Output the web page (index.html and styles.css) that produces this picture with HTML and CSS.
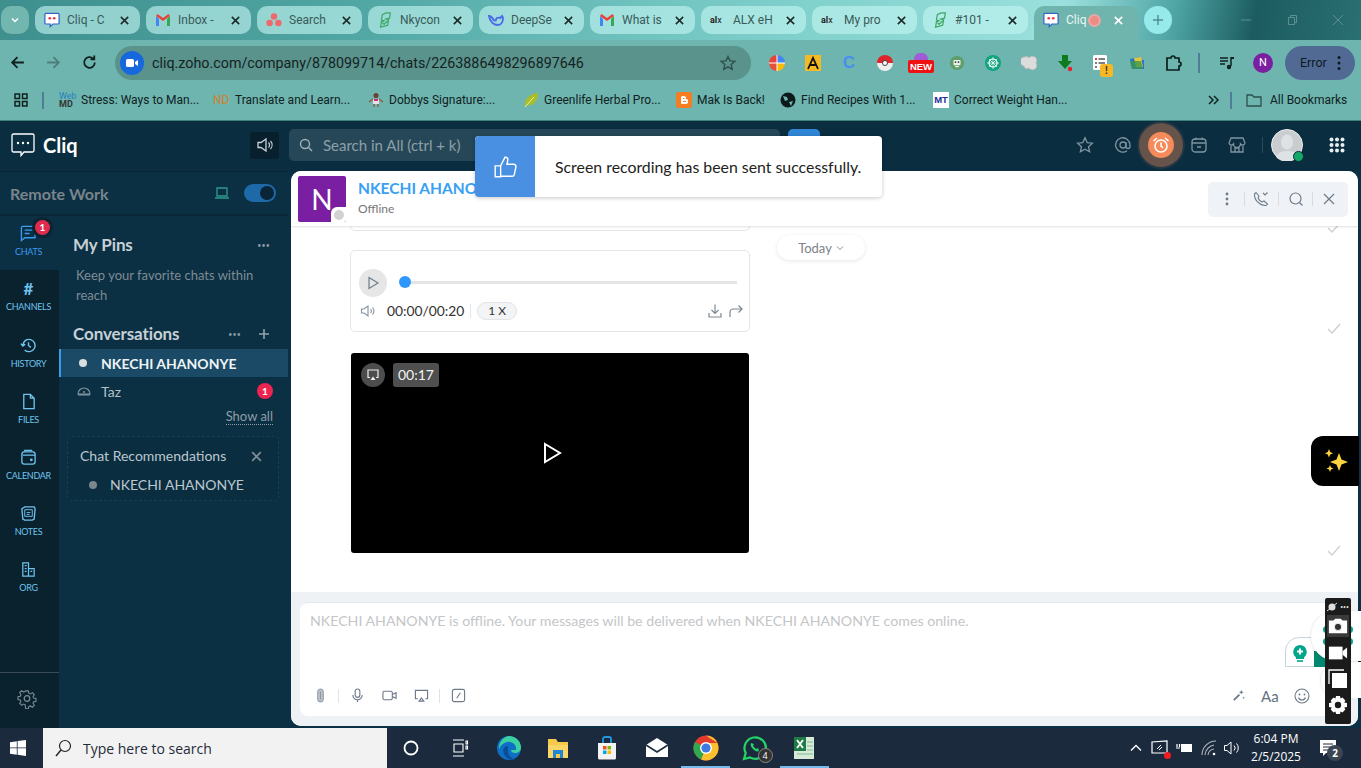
FILE: index.html
```html
<!DOCTYPE html>
<html lang="en">
<head>
<meta charset="utf-8">
<title>Cliq</title>
<link rel="stylesheet" href="styles.css">
</head>
<body>
<svg class="sprite" aria-hidden="true">
  <symbol id="x" viewBox="0 0 12 12"><path d="M2 2l8 8M10 2l-8 8" fill="none" stroke="currentColor" stroke-width="1.7"/></symbol>
  <symbol id="cliq" viewBox="0 0 18 18"><path d="M2 1.500h14a1 1 0 0 1 1 1v10a1 1 0 0 1-1 1h-6l-3 3v-3H2a1 1 0 0 1-1-1v-10a1 1 0 0 1 1-1z" fill="#fff" stroke="#3565c9" stroke-width="1.400"/><circle cx="6.500" cy="7" r="1.500" fill="#e8324a"/><circle cx="11.500" cy="7" r="1.500" fill="#e8324a"/></symbol>
  <symbol id="gmail" viewBox="0 0 16 14"><path d="M1 3v10h3V6z" fill="#4285f4"/><path d="M12 6v7h3V3z" fill="#34a853"/><path d="M1 3l7 5 7-5-1.500-2L8 5 2.500 1z" fill="#ea4335"/></symbol>
  <symbol id="nky" viewBox="0 0 16 18"><path d="M9 1h5l-1 6-4 1 3 1-1 6-8 2 1-6 3-1-3-1 1-6z M5 12l2 2 4-4" fill="none" stroke="#3fa866" stroke-width="1.400"/></symbol>
  <symbol id="whale" viewBox="0 0 16 14"><path d="M1 3c1 6 5 9 9 9 3 0 5-3 5-7l-1-2-2 2c-2-1-4 0-4 2 0 1-2 1-3-1S2 3 1 3z" fill="none" stroke="#4a6bea" stroke-width="1.900"/></symbol>
</svg>

<header class="tabstrip">
  <button class="tab-menu"><svg class="i10" viewBox="0 0 10 10"><path d="M2 3.500l3 3 3-3" fill="none" stroke="#fff" stroke-width="1.500"/></svg></button>
  <div class="tab"><svg class="fav"><use href="#cliq"/></svg><span class="tab-title">Cliq - C</span><svg class="tab-x"><use href="#x"/></svg></div>
  <div class="tab"><svg class="fav"><use href="#gmail"/></svg><span class="tab-title">Inbox -</span><svg class="tab-x"><use href="#x"/></svg></div>
  <div class="tab"><svg class="fav" viewBox="0 0 16 16"><circle cx="8" cy="4.500" r="3.200" fill="#f0696a"/><circle cx="3.600" cy="11" r="3.200" fill="#f0696a"/><circle cx="12.400" cy="11" r="3.200" fill="#f0696a"/></svg><span class="tab-title">Search</span><svg class="tab-x"><use href="#x"/></svg></div>
  <div class="tab"><svg class="fav"><use href="#nky"/></svg><span class="tab-title">Nkycon</span><svg class="tab-x"><use href="#x"/></svg></div>
  <div class="tab"><svg class="fav"><use href="#whale"/></svg><span class="tab-title">DeepSe</span><svg class="tab-x"><use href="#x"/></svg></div>
  <div class="tab"><svg class="fav"><use href="#gmail"/></svg><span class="tab-title">What is</span><svg class="tab-x"><use href="#x"/></svg></div>
  <div class="tab"><span class="fav alx">al<b>x</b></span><span class="tab-title">ALX eH</span><svg class="tab-x"><use href="#x"/></svg></div>
  <div class="tab"><span class="fav alx">al<b>x</b></span><span class="tab-title">My pro</span><svg class="tab-x"><use href="#x"/></svg></div>
  <div class="tab"><svg class="fav"><use href="#nky"/></svg><span class="tab-title">#101 -</span><svg class="tab-x"><use href="#x"/></svg></div>
  <div class="tab tab-active"><svg class="fav"><use href="#cliq"/></svg><span class="tab-title tab-title-short">Cliq</span><span class="rec-dot"></span><svg class="tab-x"><use href="#x"/></svg></div>
  <button class="tab-new"><svg class="i12" viewBox="0 0 12 12"><path d="M6 1v10M1 6h10" stroke="#4d8d92" stroke-width="1.400"/></svg></button>
  <div class="win-controls">
    <span class="win-btn"><svg class="i12" viewBox="0 0 12 12"><path d="M1 6h10" stroke="#5d8f90"/></svg></span>
    <span class="win-btn"><svg class="i12" viewBox="0 0 12 12"><path d="M2.500 3.500h6v7h-6zM4.500 3.500V1.500h6v7h-2" fill="none" stroke="#5d8f90"/></svg></span>
    <span class="win-btn"><svg class="i12" viewBox="0 0 12 12"><path d="M1 1l10 10M11 1L1 11" stroke="#5d8f90"/></svg></span>
  </div>
</header>

<nav class="toolbar">
  <svg class="nav-ico" viewBox="0 0 16 16"><path d="M14 8H3M8 3L3 8l5 5" fill="none" stroke="#10211f" stroke-width="1.700"/></svg>
  <svg class="nav-ico" viewBox="0 0 16 16"><path d="M2 8h11M8 3l5 5-5 5" fill="none" stroke="#4d7f7b" stroke-width="1.700"/></svg>
  <svg class="nav-ico" viewBox="0 0 16 16"><path d="M13 8a5 5 0 1 1-1.600-3.700M12.500 1.500v3.500H9" fill="none" stroke="#10211f" stroke-width="1.700"/></svg>
  <div class="omnibox">
    <span class="site-chip"><svg class="i14" viewBox="0 0 14 14"><rect x="1" y="3" width="8" height="8" rx="1.500" fill="#fff"/><path d="M10 6l3-2v6l-3-2z" fill="#fff"/></svg></span>
    <span class="url">cliq.zoho.com/company/878099714/chats/2263886498296897646</span>
    <svg class="omni-star" viewBox="0 0 16 16"><path d="M8 1.500l2 4.400 4.700.5-3.500 3.200 1 4.700L8 11.900l-4.200 2.400 1-4.700L1.300 6.400 6 5.900z" fill="none" stroke="#2f4f4c" stroke-width="1.400"/></svg>
  </div>
  <div class="ext-row">
    <span class="ext"><svg class="i16" viewBox="0 0 16 16"><path d="M8 0a8 8 0 0 0-8 8h8z" fill="#ea4335"/><path d="M8 0a8 8 0 0 1 8 8H8z" fill="#4285f4"/><path d="M0 8a8 8 0 0 0 8 8V8z" fill="#e8503a"/><path d="M16 8a8 8 0 0 1-8 8V8z" fill="#fbbc05"/><path d="M0 7.500h16v1H0zM7.500 0h1v16h-1z" fill="#fff"/></svg></span>
    <span class="ext"><svg class="i16" viewBox="0 0 16 16"><rect width="16" height="16" fill="#f5b923"/><path d="M3 14L8 3l5 11M5.500 10h5" fill="none" stroke="#111" stroke-width="1.800"/></svg></span>
    <span class="ext ext-c">C</span>
    <span class="ext"><svg class="i16" viewBox="0 0 16 16"><path d="M0 8a8 8 0 0 1 16 0z" fill="#e1242a"/><path d="M0 8a8 8 0 0 0 16 0z" fill="#eee"/><circle cx="8" cy="8" r="2.500" fill="#fff" stroke="#444"/></svg></span>
    <span class="ext ext-new"><i class="new-top"></i><b class="new-tag">NEW</b></span>
    <span class="ext"><svg class="i16" viewBox="0 0 16 18"><circle cx="8" cy="9" r="8" fill="#5f9d6a"/><rect x="4" y="5.500" width="8" height="6" rx="1" fill="#e8f2e8"/><circle cx="6.300" cy="8" r="1" fill="#333"/><circle cx="9.700" cy="8" r="1" fill="#333"/><path d="M6 13h4" stroke="#fff" stroke-width="1.500"/></svg></span>
    <span class="ext"><svg class="i16" viewBox="0 0 16 16"><circle cx="8" cy="8" r="8" fill="#12a37f"/><circle cx="8" cy="8" r="4" fill="none" stroke="#fff" stroke-width="1.200"/><path d="M4 4l8 8M12 4l-8 8M8 2v12M2 8h12" stroke="#fff" stroke-width=".7"/></svg></span>
    <span class="ext"><svg class="i16" viewBox="0 0 16 16"><path d="M4 2a3 3 0 0 1 4 1 4 4 0 0 1 7 5 4 4 0 0 1-7 5 3 3 0 0 1-5-2 4 4 0 0 1 1-9z" fill="#dcdcdc" stroke="#bbb"/></svg></span>
    <span class="ext"><svg class="i18" viewBox="0 0 18 18"><path d="M6 1h6v6h4l-7 8-7-8h4z" fill="#0d7a1d"/><circle cx="14" cy="15" r="2.200" fill="#e8202a"/></svg></span>
    <span class="ext ext-doc"><svg class="i18" viewBox="0 0 18 18"><rect x="1" y="1" width="14" height="15" rx="1.500" fill="#fff"/><path d="M3 5h2M6.500 5H13M3 9h2M6.500 9H13M3 13h2" stroke="#555" stroke-width="1.300"/><circle cx="4" cy="5" r="1" fill="#e8322a"/></svg><b class="warn">!</b></span>
    <span class="ext"><svg class="i16" viewBox="0 0 16 16"><path d="M1 4l10-2 1 3 3 0 0 9H3z" fill="#2c6fd6"/><path d="M5 3l7-1 2 10H7z" fill="#e4c63a"/><path d="M3 14L1 6h11l2 8z" fill="#3a9a4c" opacity=".8"/></svg></span>
    <span class="ext"><svg class="i18" viewBox="0 0 18 18"><path d="M3 4h4a2 2 0 0 1 4 0h4v4a2 2 0 0 1 0 4v4H3z" fill="none" stroke="#0a1f1d" stroke-width="1.700"/></svg></span>
    <span class="tb-sep"></span>
    <span class="ext"><svg class="i16" viewBox="0 0 16 16"><path d="M1 3h8M1 6h8M1 9h5" stroke="#10211f" stroke-width="1.500"/><path d="M12 2v9" stroke="#10211f" stroke-width="1.500"/><circle cx="10" cy="12" r="2.200" fill="#10211f"/><path d="M12 2h3v2h-3" fill="#10211f"/></svg></span>
    <span class="ext"><span class="profile">N</span></span>
    <span class="err-pill">Error<svg class="err-dots" viewBox="0 0 4 16"><circle cx="2" cy="2.500" r="1.500"/><circle cx="2" cy="8" r="1.500"/><circle cx="2" cy="13.500" r="1.500"/></svg></span>
  </div>
</nav>

<nav class="bookmarks">
  <svg class="bm-apps" viewBox="0 0 14 14"><path d="M1 1h4.500v4.500H1zM8.500 1H13v4.500H8.500zM1 8.500h4.500V13H1zM8.500 8.500H13V13H8.500z" fill="none" stroke="#10211f" stroke-width="1.500"/></svg>
  <span class="bm-sep"></span>
  <div class="bm-grid">
    <span class="bm"><span class="ic-webmd"><span class="web">Web</span><span class="md">MD</span></span>Stress: Ways to Man...</span>
    <span class="bm"><span class="ic-nd">ND</span>Translate and Learn...</span>
    <span class="bm"><svg class="i16" viewBox="0 0 16 16"><circle cx="8" cy="3.500" r="2.500" fill="#6b4030"/><path d="M5 7h6v5H5z" fill="#e8dfe8"/><path d="M1 10l4-3M15 10l-4-3M6 12v3M10 12v3" stroke="#8d5a40" stroke-width="1.300"/><path d="M6 7h4v2H6z" fill="#c2356e"/></svg>Dobbys Signature:...</span>
    <span class="bm"><svg class="i16" viewBox="0 0 16 16"><path d="M2 15C1 7 6 2 15 1c0 8-4 13-10 12z" fill="#a9bd2a"/><path d="M2 15L11 5" stroke="#ecf0a8"/></svg>Greenlife Herbal Pro...</span>
    <span class="bm"><svg class="i16" viewBox="0 0 16 16"><rect width="16" height="16" rx="3" fill="#f57c1f"/><path d="M5 11V5.500A1.500 1.500 0 0 1 6.500 4H8a2 2 0 0 1 2 2v1h.5A1.500 1.500 0 0 1 12 8.500V10a2 2 0 0 1-2 2H6a1 1 0 0 1-1-1z" fill="#fff"/><path d="M7 6.500h1.500M7 9.500h3" stroke="#f57c1f" stroke-width="1.200"/></svg>Mak Is Back!</span>
    <span class="bm"><svg class="i16" viewBox="0 0 16 16"><circle cx="8" cy="8" r="7.500" fill="#0c1a1a"/><path d="M3 4l4 1 1 3-3 1zM9 10l4-1-2 5z" fill="#6fb5ae"/></svg>Find Recipes With 1...</span>
    <span class="bm"><span class="ic-mt">MT</span>Correct Weight Han...</span>
  </div>
  <svg class="bm-more" viewBox="0 0 12 12"><path d="M2 2l4 4-4 4M7 2l4 4-4 4" fill="none" stroke="#10211f" stroke-width="1.500"/></svg>
  <span class="bm-sep bm-sep-end"></span>
  <span class="bm bm-all"><svg class="i16" viewBox="0 0 16 16"><path d="M1 3h5l2 2h7v9H1z" fill="none" stroke="#2f4f4c" stroke-width="1.300"/></svg>All Bookmarks</span>
</nav>

<main class="app">
  <div class="app-top">
    <div class="brand">
      <svg class="brand-logo" viewBox="0 0 24 24"><path d="M2.500 1h19A1.500 1.500 0 0 1 23 2.500v15a1.500 1.500 0 0 1-1.500 1.500H13l-3 3.500V19H2.500A1.500 1.500 0 0 1 1 17.500v-15A1.500 1.500 0 0 1 2.500 1z" fill="none" stroke="#fff" stroke-width="1.300"/><circle cx="7" cy="10" r="1.200" fill="#fff"/><circle cx="12" cy="10" r="1.200" fill="#fff"/><circle cx="17" cy="10" r="1.200" fill="#fff"/></svg>
      <span class="brand-name">Cliq</span>
    </div>
    <button class="sound-btn"><svg class="i18" viewBox="0 0 18 18"><path d="M2 6.500h3L10 3v12l-5-3.500H2z" fill="none" stroke="#c6d0d5" stroke-width="1.300"/><path d="M12.500 6.500a3.500 3.500 0 0 1 0 5M14.500 5a6 6 0 0 1 0 8" fill="none" stroke="#c6d0d5" stroke-width="1.200"/></svg></button>
    <div class="global-search"><svg class="i14" viewBox="0 0 14 14"><circle cx="6" cy="6" r="4.500" fill="none" stroke="#9fb0b8" stroke-width="1.400"/><path d="M9.500 9.500L13 13" stroke="#9fb0b8" stroke-width="1.400"/></svg><span>Search in All (ctrl + k)</span></div>
    <span class="blue-btn"></span>
    <div class="top-icons">
      <svg class="i18" viewBox="0 0 18 18"><path d="M9 1.800l2.200 4.800 5.200.6-3.900 3.500 1.100 5.100L9 13.200l-4.600 2.600 1.100-5.100L1.600 7.200l5.200-.6z" fill="none" stroke="#7e949f" stroke-width="1.300"/></svg>
      <svg class="i18" viewBox="0 0 18 18"><circle cx="9" cy="9" r="3" fill="none" stroke="#7e949f" stroke-width="1.300"/><path d="M12 6v4.500a2 2 0 0 0 4 0V9a7.200 7.200 0 1 0-3 5.800" fill="none" stroke="#7e949f" stroke-width="1.300"/></svg>
      <span class="alarm"><svg class="i18" viewBox="0 0 18 18"><circle cx="9" cy="10" r="6" fill="none" stroke="#fff" stroke-width="1.600"/><path d="M9 6.500V10l2 2M1.500 5L5 2M16.500 5L13 2" fill="none" stroke="#fff" stroke-width="1.600"/></svg></span>
      <svg class="i18" viewBox="0 0 18 18"><rect x="2" y="3" width="14" height="13" rx="3" fill="none" stroke="#7e949f" stroke-width="1.300"/><path d="M2 7h14M6 1.500V4M12 1.500V4M7 11h4" stroke="#7e949f" stroke-width="1.300"/></svg>
      <svg class="i18" viewBox="0 0 18 18"><path d="M3 2h12l2 5a2.500 2.500 0 0 1-4.500 1 2.500 2.500 0 0 1-7 0A2.500 2.500 0 0 1 1 7zM3 10v6h12v-6M7 16v-4h4v4" fill="none" stroke="#7e949f" stroke-width="1.300"/></svg>
      <span class="top-sep"></span>
      <span class="avatar-me"><svg class="avatar-svg" viewBox="0 0 32 32"><circle cx="16" cy="16" r="15.500" fill="#c9cdd0" stroke="#eceeef"/><ellipse cx="16" cy="13" rx="6" ry="7.500" fill="#dfe2e4"/><path d="M5 28c2-5 6-6 11-6s9 1 11 6a15 15 0 0 1-22 0z" fill="#dfe2e4"/></svg><i class="presence"></i></span>
      <svg class="grid-ico" viewBox="0 0 16 16"><g fill="#e8eef1"><circle cx="2.500" cy="2.500" r="2"/><circle cx="8" cy="2.500" r="2"/><circle cx="13.500" cy="2.500" r="2"/><circle cx="2.500" cy="8" r="2"/><circle cx="8" cy="8" r="2"/><circle cx="13.500" cy="8" r="2"/><circle cx="2.500" cy="13.500" r="2"/><circle cx="8" cy="13.500" r="2"/><circle cx="13.500" cy="13.500" r="2"/></g></svg>
    </div>
  </div>

  <div class="app-body">
    <aside class="sidebar">
      <div class="workspace">
        <span class="ws-name">Remote Work</span>
        <svg class="ws-laptop" viewBox="0 0 14 12"><path d="M2 1h10v8H2zM0 11h14" fill="none" stroke="#2e9a8e" stroke-width="1.300"/></svg>
        <span class="ws-toggle"><i></i></span>
      </div>
      <div class="side-main">
        <div class="rail">
          <div class="rail-item rail-active">
            <svg class="rail-ico" viewBox="0 0 18 18"><path d="M3 1.500h13v12H5l-3.500 3v-13.500a1.500 1.500 0 0 1 1.500-1.500z" fill="none" stroke="#3b9bee" stroke-width="1.400"/><path d="M5 5.500h8M5 9h5" stroke="#3b9bee" stroke-width="1.400"/></svg>
            <span>CHATS</span><b class="rail-badge">1</b>
          </div>
          <div class="rail-item"><span class="hash">#</span><span>CHANNELS</span></div>
          <div class="rail-item"><svg class="rail-ico" viewBox="0 0 18 18"><path d="M3 9a6.500 6.500 0 1 1 2 4.700M1 7l2 2.500L5.500 7.500M9 5.500V9l2.500 2" fill="none" stroke="#6fc4ee" stroke-width="1.500"/></svg><span>HISTORY</span></div>
          <div class="rail-item"><svg class="rail-ico" viewBox="0 0 18 18"><path d="M4 1.500h7l4 4v11H4zM11 1.500v4h4" fill="none" stroke="#6fc4ee" stroke-width="1.400"/></svg><span>FILES</span></div>
          <div class="rail-item"><svg class="rail-ico" viewBox="0 0 18 18"><rect x="2" y="3" width="14" height="13" rx="2.500" fill="none" stroke="#6fc4ee" stroke-width="1.400"/><path d="M3 6.500h13M5 3V1.500h8" fill="none" stroke="#6fc4ee" stroke-width="1.200"/><circle cx="12" cy="11.500" r="1.500" fill="#6fc4ee"/></svg><span>CALENDAR</span></div>
          <div class="rail-item"><svg class="rail-ico" viewBox="0 0 18 18"><path d="M2 4l3-2h10l1 2-1 11-2 1H5l-2-1z" fill="none" stroke="#6fc4ee" stroke-width="1.400"/><path d="M5 5h8v7H5zM7 8h4M7 10h3" fill="none" stroke="#6fc4ee"/></svg><span>NOTES</span></div>
          <div class="rail-item"><svg class="rail-ico" viewBox="0 0 18 18"><path d="M3 2h6v14H3zM9 8h6v8H9zM5 5h2M5 8h2M5 11h2M11 11h2" fill="none" stroke="#6fc4ee" stroke-width="1.300"/></svg><span>ORG</span></div>
          <div class="rail-foot"><svg class="gear" viewBox="0 0 20 20"><path d="M8.500 1h3l.5 2.500 1.800.8 2.200-1.400 2.100 2.100-1.400 2.200.8 1.800 2.500.5v3l-2.500.5-.8 1.800 1.400 2.200-2.100 2.100-2.200-1.400-1.800.8-.5 2.500h-3L8 16.500l-1.800-.8L4 17.100 1.900 15l1.400-2.200-.8-1.800L0 10.500v-3l2.500-.5.8-1.800L1.900 3 4 .9l2.200 1.400L8 1.500z" fill="none" stroke="#7d8e96" stroke-width="1.200" transform="translate(1 1) scale(.9)"/><circle cx="10" cy="9.500" r="2.800" fill="none" stroke="#7d8e96" stroke-width="1.200"/></svg></div>
        </div>
        <div class="panel">
          <div class="panel-head pins-head"><h2>My Pins</h2><span class="dots">•••</span></div>
          <p class="pins-note">Keep your favorite chats within reach</p>
          <div class="panel-head conv-head"><h2>Conversations</h2><span class="dots">•••</span><svg class="plus" viewBox="0 0 12 12"><path d="M6 1v10M1 6h10" stroke="#93a3ab" stroke-width="1.600"/></svg></div>
          <div class="conv conv-active"><i class="conv-dot"></i><span>NKECHI AHANONYE</span></div>
          <div class="conv"><svg class="conv-cloud" viewBox="0 0 14 12"><path d="M1 9a6 6 0 0 1 12 0zM1 10h12" fill="none" stroke="#7f929b" stroke-width="1.200"/><circle cx="7" cy="7" r="1" fill="#7f929b"/></svg><span>Taz</span><b class="conv-badge">1</b></div>
          <div class="show-all"><span>Show all</span></div>
          <section class="recs">
            <div class="recs-head"><span>Chat Recommendations</span><svg class="recs-x"><use href="#x"/></svg></div>
            <div class="recs-row"><i></i><span>NKECHI AHANONYE</span></div>
          </section>
        </div>
      </div>
    </aside>

    <section class="chat">
      <div class="chat-head">
        <div class="chat-avatar"><span>N</span><i></i></div>
        <div class="chat-who"><span class="chat-name">NKECHI AHANONYE</span><span class="chat-status">Offline</span></div>
        <div class="chat-actions">
          <svg class="i16" viewBox="0 0 16 16"><g fill="#6e7b8a"><circle cx="8" cy="3" r="1.400"/><circle cx="8" cy="8" r="1.400"/><circle cx="8" cy="13" r="1.400"/></g></svg>
          <i class="act-sep"></i>
          <svg class="i16" viewBox="0 0 16 16"><path d="M3 1.500L6 5 5 7a8 8 0 0 0 4 4l2-1 3.500 3-1.500 1.500C7 15 1 9 1.500 3zM10 2l2 2 2.500-2.500" fill="none" stroke="#6e7b8a" stroke-width="1.100"/></svg>
          <i class="act-sep"></i>
          <svg class="i16" viewBox="0 0 16 16"><circle cx="7.500" cy="7.500" r="5.500" fill="none" stroke="#6e7b8a" stroke-width="1.200"/><path d="M11.500 11.500l3 3" stroke="#6e7b8a" stroke-width="1.200"/></svg>
          <i class="act-sep"></i>
          <svg class="i14" viewBox="0 0 14 14"><path d="M2 2l10 10M12 2L2 12" stroke="#6e7b8a" stroke-width="1.200"/></svg>
        </div>
      </div>
      <div class="chat-scroll">
        <div class="thread">
          <div class="msg-stub"></div>
          <article class="audio-card">
            <div class="audio-top">
              <span class="audio-play"><svg class="i14" viewBox="0 0 14 14"><path d="M3 1.500L12 7l-9 5.500z" fill="none" stroke="#6e7b8a" stroke-width="1.200"/></svg></span>
              <span class="audio-track"><i></i></span>
            </div>
            <div class="audio-bottom">
              <svg class="i16" viewBox="0 0 16 16"><path d="M1.500 6h2.500L8 3v10L4 10H1.500zM10.500 6a3 3 0 0 1 0 4M12.500 4.500a5.500 5.500 0 0 1 0 7" fill="none" stroke="#8592a0" stroke-width="1.100"/></svg>
              <span class="audio-time">00:00/00:20</span>
              <span class="audio-speed">1 X</span>
              <svg class="i16 audio-dl" viewBox="0 0 16 16"><path d="M8 1.500v9M4.500 7L8 10.500 11.500 7M2 10v4h12v-4" fill="none" stroke="#7a8794" stroke-width="1.200"/></svg>
              <svg class="i16" viewBox="0 0 16 16"><path d="M2 14V9a3 3 0 0 1 3-3h9M10.500 2.500L14 6l-3.500 3.500" fill="none" stroke="#7a8794" stroke-width="1.200"/></svg>
            </div>
          </article>
          <article class="video-card">
            <div class="video-meta">
              <span class="video-badge"><svg class="i12" viewBox="0 0 12 12"><path d="M3 8.500H1V1h10v7.500H9" fill="none" stroke="#eee" stroke-width="1.200"/><path d="M3.500 11L6 7.500 8.500 11z" fill="#eee"/></svg></span>
              <span class="video-time">00:17</span>
            </div>
            <svg class="video-play" viewBox="0 0 20 22"><path d="M3 2l15 9-15 9z" fill="none" stroke="#fff" stroke-width="2"/></svg>
          </article>
        </div>
        <div class="date-col"><span class="today">Today <svg class="i8" viewBox="0 0 8 8"><path d="M1 2.500l3 3 3-3" fill="none" stroke="#8a8f95"/></svg></span></div>
        <div class="ticks">
          <svg class="tick tick-a" viewBox="0 0 14 12"><path d="M1 6l4 4 8-9" fill="none" stroke="#cfd2d5" stroke-width="1.500"/></svg>
          <svg class="tick tick-b" viewBox="0 0 14 12"><path d="M1 6l4 4 8-9" fill="none" stroke="#cfd2d5" stroke-width="1.500"/></svg>
          <svg class="tick tick-c" viewBox="0 0 14 12"><path d="M1 6l4 4 8-9" fill="none" stroke="#cfd2d5" stroke-width="1.500"/></svg>
        </div>
      </div>
      <div class="composer-wrap">
        <div class="composer">
          <p class="placeholder">NKECHI AHANONYE is offline. Your messages will be delivered when NKECHI AHANONYE comes online.</p>
          <div class="composer-tools">
            <svg class="tool tool-clip" viewBox="0 0 16 16"><path d="M5 4a3 3 0 0 1 6 0v8a3 3 0 0 1-6 0zM8 4v8" fill="#b9c0c8" stroke="#8a95a2" stroke-width="1"/></svg>
            <i class="tool-sep"></i>
            <svg class="tool tool-mic" viewBox="0 0 16 16"><rect x="5.500" y="1" width="5" height="9" rx="2.500" fill="none" stroke="#6c7a89" stroke-width="1.200"/><path d="M3 7.500a5 5 0 0 0 10 0M8 12.500V15" fill="none" stroke="#6c7a89" stroke-width="1.200"/></svg>
            <svg class="tool tool-cam" viewBox="0 0 16 16"><rect x="1" y="3.500" width="10" height="9" rx="1.500" fill="none" stroke="#6c7a89" stroke-width="1.200"/><path d="M11 7l4-2v6l-4-2" fill="none" stroke="#6c7a89" stroke-width="1.200"/></svg>
            <svg class="tool tool-scr" viewBox="0 0 16 16"><path d="M4 11.500H1.500v-9h13v9H12M5.500 14L8 10.500l2.500 3.500z" fill="none" stroke="#6c7a89" stroke-width="1.200"/></svg>
            <i class="tool-sep tool-sep2"></i>
            <svg class="tool tool-cmd" viewBox="0 0 16 16"><rect x="1.500" y="1.500" width="13" height="13" rx="2" fill="none" stroke="#6c7a89" stroke-width="1.200"/><path d="M6 11l4-6" stroke="#6c7a89" stroke-width="1.200"/></svg>
            <svg class="tool tool-magic" viewBox="0 0 16 16"><path d="M3 13l6-6" stroke="#6c7a89" stroke-width="2"/><path d="M11 2l.7 1.800L13.500 4.500l-1.800.7L11 7l-.7-1.800-1.800-.7 1.800-.7zM13.500 9l.4 1 1 .4-1 .4-.4 1-.4-1-1-.4 1-.4z" fill="#6c7a89"/></svg>
            <span class="tool-aa">Aa</span>
            <svg class="tool tool-emoji" viewBox="0 0 16 16"><circle cx="8" cy="8" r="7" fill="none" stroke="#6c7a89" stroke-width="1.100"/><circle cx="5.500" cy="6.500" r=".9" fill="#6c7a89"/><circle cx="10.500" cy="6.500" r=".9" fill="#6c7a89"/><path d="M4.500 9.500a3.700 3.700 0 0 0 7 0" fill="none" stroke="#6c7a89" stroke-width="1.100"/></svg>
          </div>
        </div>
      </div>
    </section>
  </div>

  <div class="toast">
    <span class="toast-side"><svg class="toast-ico" viewBox="0 0 22 22"><path d="M7 10l4-8c2 0 3 1 2.500 3l-.7 3.500H19a2 2 0 0 1 2 2.500l-1.500 7a2 2 0 0 1-2 1.500H7zM2 10h5v10H2z" fill="none" stroke="#fff" stroke-width="1.300"/></svg></span>
    <span class="toast-text">Screen recording has been sent successfully.</span>
  </div>
  <div class="ai-fab"><svg class="ai-ico" viewBox="0 0 28 28"><path d="M17 6l2.500 6.500L26 15l-6.500 2.500L17 24l-2.500-6.500L8 15l6.500-2.500z" fill="#ffd23f"/><path d="M7 2l1.200 3L11 6.200 8.200 7.400 7 10.400 5.800 7.400 3 6.200l2.800-1.200zM8 18l1 2.500 2.500 1-2.500 1L8 25l-1-2.500-2.500-1 2.500-1z" fill="#ffd23f"/></svg></div>
  <div class="gram-a"><span class="gram-dot"></span><span class="gram-dot gram-dot2"></span></div>
  <div class="gram-b"></div>
  <div class="gram-tag"><svg class="gram-bulb" viewBox="0 0 16 20"><path d="M8 1a7 7 0 0 1 4 12.500V15H4v-1.500A7 7 0 0 1 8 1z" fill="#00a68c"/><path d="M8 4.500v6M5 7.500h6" stroke="#fff" stroke-width="2"/><path d="M5 17h6" stroke="#00a68c" stroke-width="1.600"/></svg><span class="gram-green"></span></div>
  <div class="shot-bar">
    <div class="shot-top"><svg class="i10" viewBox="0 0 10 10"><circle cx="5" cy="5" r="3.500" fill="#ddd"/><path d="M0 9l10-8" stroke="#ddd"/></svg><span class="shot-dots">•••</span></div>
    <span class="shot-btn shot-btn-on"><svg class="shot-ico" viewBox="0 0 22 18"><path d="M1 3h5l2-2h6l2 2h5v14H1z" fill="#fff"/><circle cx="11" cy="10" r="4" fill="#333" stroke="#fff"/></svg></span>
    <span class="shot-btn"><svg class="shot-ico" viewBox="0 0 22 16"><rect x="1" y="1" width="15" height="14" fill="#fff"/><path d="M16 6l5-4v12l-5-4z" fill="#fff"/></svg></span>
    <span class="shot-btn"><svg class="shot-ico" viewBox="0 0 20 20"><path d="M1 15V1h15" fill="none" stroke="#fff" stroke-width="1.300"/><rect x="4" y="4" width="15" height="15" fill="#fff"/></svg></span>
    <span class="shot-btn"><svg class="shot-ico" viewBox="0 0 20 20"><path d="M8 1h4l.5 2.500 2-.9 2.800 2.800-1 2 2.700.6v4l-2.700.6 1 2-2.800 2.800-2-1L12 19H8l-.5-2.600-2 1-2.800-2.800 1-2L1 12V8l2.700-.6-1-2 2.800-2.800 2 .9z" fill="#fff"/><circle cx="10" cy="10" r="3.200" fill="#1b1b1b"/></svg></span>
  </div>
</main>

<footer class="taskbar">
  <svg class="start" viewBox="0 0 16 16"><path d="M0 2.200L6.800 1.200V7.500H0zM7.600 1.100L16 0v7.500H7.600zM0 8.300h6.800v6.500L0 13.800zM7.600 8.300H16V16l-8.400-1.200z" fill="#fff"/></svg>
  <div class="task-search"><svg class="i18" viewBox="0 0 18 18"><circle cx="11" cy="7" r="5.500" fill="none" stroke="#222" stroke-width="1.200"/><path d="M7 11l-5 6" stroke="#222" stroke-width="1.400"/></svg><span>Type here to search</span></div>
  <div class="task-apps">
    <span class="task-app"><svg class="i16" viewBox="0 0 16 16"><circle cx="8" cy="8" r="6.500" fill="none" stroke="#fff" stroke-width="1.800"/></svg></span>
    <span class="task-app"><svg class="i18" viewBox="0 0 18 18"><path d="M2 1h11M2 17h11M3 5h9v8H3zM15 2v3h1.500V2zM15 7v3h1.500V7z" fill="none" stroke="#fff" stroke-width="1.100"/></svg></span>
    <span class="task-app"><svg class="i26" viewBox="0 0 26 26"><circle cx="13" cy="13" r="12" fill="#0f6fc6"/><path d="M13 1a12 12 0 0 1 12 12c0 3-3 5-6 5-2 0-4-1-4-3h5c1-5-4-9-9-8-4 1-7 4-8 7A12 12 0 0 1 13 1z" fill="#3cd0a0"/><path d="M12 11c-4 0-6 4-4 8 2 5 8 7 12 5-6 0-9-5-8-13z" fill="#0a4d94"/></svg></span>
    <span class="task-app"><svg class="i24" viewBox="0 0 24 24"><path d="M2 3h8l2 3h10v16H2z" fill="#f7c948"/><path d="M2 9h20v13H2z" fill="#fbd667"/><path d="M7 14h10v8H7z" fill="#1f87d6"/><path d="M10 18h4v4h-4z" fill="#f7c948"/></svg></span>
    <span class="task-app"><svg class="i24" viewBox="0 0 24 24"><path d="M3 7h18v15a1.500 1.500 0 0 1-1.500 1.500h-15A1.500 1.500 0 0 1 3 22z" fill="#f3f3f3"/><path d="M8 7V3a2 2 0 0 1 2-2h4a2 2 0 0 1 2 2v4" fill="none" stroke="#1f9ae0" stroke-width="1.800"/><path d="M8 10h3.500v3.500H8z" fill="#f25022"/><path d="M12.500 10H16v3.500h-3.500z" fill="#7fba00"/><path d="M8 14.500h3.500V18H8z" fill="#00a4ef"/><path d="M12.500 14.500H16V18h-3.500z" fill="#ffb900"/></svg></span>
    <span class="task-app"><svg class="i24" viewBox="0 0 24 24"><path d="M1 9L12 2l11 7v12H1z" fill="#fff"/><path d="M1 9l11 7 11-7" fill="none" stroke="#1b2b3d" stroke-width="1.500"/></svg></span>
    <span class="task-app task-on"><svg class="i26" viewBox="0 0 26 26"><circle cx="13" cy="13" r="12.500" fill="#e33b2e"/><path d="M13 .5A12.500 12.500 0 0 1 24.500 8H13l-5 16.500A12.500 12.500 0 0 0 13 25.500 12.500 12.500 0 0 0 25.500 13c0-1.700-.3-3.500-1-5z" fill="#fbc02d"/><path d="M13 13L8 24.500A12.500 12.500 0 0 1 2 7z" fill="#2fa84f"/><circle cx="13" cy="13" r="6" fill="#fff"/><circle cx="13" cy="13" r="4.600" fill="#3c7be0"/></svg></span>
    <span class="task-app"><svg class="i26" viewBox="0 0 26 26"><path d="M2 24l1.700-6A10.700 10.700 0 1 1 8 22.400z" fill="none" stroke="#25d366" stroke-width="2.200"/><path d="M9 8c-1 2 0 4 2 6s4 3 6 2l-1-3-2 1-3-3 1-2z" fill="#25d366"/></svg><b class="wa-badge">4</b></span>
    <span class="task-app task-on"><svg class="i24" viewBox="0 0 24 24"><rect x="2" y="1" width="20" height="22" fill="#d6ead9"/><path d="M2 1h12v14H2z" fill="#1e7b45"/><path d="M5 4l6 8M11 4l-6 8" stroke="#fff" stroke-width="1.800"/><path d="M15 6h6M15 10h6M15 14h6M5 18h16" stroke="#7fb98f"/></svg></span>
  </div>
  <div class="tray">
    <svg class="i14 tray-caret" viewBox="0 0 14 14"><path d="M2 9.500L7 4.500l5 5" fill="none" stroke="#fff" stroke-width="1.300"/></svg>
    <span class="tray-cam"><svg class="i18" viewBox="0 0 18 18"><path d="M1 3l15-1v12H1z" fill="none" stroke="#fff" stroke-width="1.200"/><path d="M6 10l4-4M8 11l3-3" stroke="#fff"/></svg><i></i></span>
    <svg class="i18" viewBox="0 0 18 18"><rect x="6" y="5" width="11" height="8" fill="#fff"/><path d="M1 9h4M2 5v3M4.500 5v3" stroke="#fff" stroke-width="1.200"/></svg>
    <svg class="i16 tray-wifi" viewBox="0 0 16 16"><path d="M1 15a14 14 0 0 1 14-14M4 15A11 11 0 0 1 13 5M7 15a7 7 0 0 1 6-6" fill="none" stroke="#aeb6bd" stroke-width="1.100"/><circle cx="13" cy="14" r="1.300" fill="#fff"/></svg>
    <svg class="i18" viewBox="0 0 18 18"><path d="M1.500 6.500H4L8 3v12l-4-3.500H1.500zM11 6.500a3.500 3.500 0 0 1 0 5M13.500 4.500a6.500 6.500 0 0 1 0 9" fill="none" stroke="#fff" stroke-width="1"/></svg>
    <div class="clock"><span>6:04 PM</span><span>2/5/2025</span></div>
    <span class="tray-note"><svg class="i18" viewBox="0 0 18 18"><path d="M1 1h16v13H7l-3 3v-3H1z" fill="#fff"/><path d="M4 5h10M4 8h10M4 11h6" stroke="#1b2b3d"/></svg><b>2</b></span>
  </div>
</footer>
</body>
</html>
```

FILE: styles.css
```css
* { box-sizing: border-box; }
html, body { margin: 0; height: 100%; overflow: hidden; }
body { width: 1361px; height: 768px; display: flex; flex-direction: column; font-family: "Lato", "Liberation Sans", sans-serif; background: #0b2f43; }
svg { display: block; flex: none; }
.sprite { position: absolute; width: 0; height: 0; }
button { border: 0; padding: 0; }
i { display: block; font-style: normal; }
.i8 { width: 8px; height: 8px; }
.i10 { width: 10px; height: 10px; }
.i12 { width: 12px; height: 12px; }
.i14 { width: 14px; height: 14px; }
.i16 { width: 16px; height: 16px; }
.i18 { width: 18px; height: 18px; }
.i24 { width: 24px; height: 24px; }
.i26 { width: 26px; height: 26px; }

/* tab strip */
.tabstrip { height: 40px; flex: none; display: flex; padding: 6px 0 0 1px; gap: 6px; background: linear-gradient(100deg, #3e8f8e 0%, #4fa5a2 25%, #7fd0cc 58%, #9be0dc 78%, #4fa5a5 86%, #1c5c60 92%, #2a6f72 100%); font-family: "Roboto", "Liberation Sans", sans-serif; }
.tab-menu { width: 28px; height: 28px; border-radius: 10px; background: #72b6b0; display: flex; align-items: center; justify-content: center; }
.tab { width: 105px; height: 28px; border-radius: 10px; background: rgba(195, 245, 242, .62); display: flex; align-items: center; padding-left: 9px; color: #3a5a58; font-size: 12px; }
.tab-active { height: 34px; width: 104px; background: #6fb5ae; color: #e9f7f5; border-radius: 10px 10px 0 0; padding-bottom: 6px; }
.fav { width: 16px; height: 16px; flex: none; }
.alx { font-size: 9px; color: #222; font-weight: 700; line-height: 16px; }
.alx b { font-weight: 400; }
.tab-title { margin-left: 7px; width: 42px; white-space: nowrap; flex: none; }
.tab-title-short { width: 21px; }
.tab-x { width: 11px; height: 11px; margin-left: 10px; color: #1d2b2b; flex: none; }
.tab-active .tab-x { color: #fff; margin-left: 12px; }
.rec-dot { width: 13px; height: 13px; border-radius: 50%; border: 2px solid #e9a8a2; background: #ec8d84; margin-left: 1px; flex: none; }
.tab-new { width: 28px; height: 28px; border-radius: 50%; background: #96eaea; display: flex; align-items: center; justify-content: center; }
.win-controls { margin-left: auto; display: flex; margin-top: -6px; }
.win-btn { width: 46px; height: 40px; display: flex; align-items: center; justify-content: center; }

/* toolbar */
.toolbar { height: 45px; flex: none; background: #6db5ae; display: flex; align-items: center; padding-left: 9px; font-family: "Roboto", "Liberation Sans", sans-serif; }
.nav-ico { width: 17px; height: 17px; margin-right: 19px; }
.omnibox { width: 636px; height: 34px; border-radius: 17px; background: #5a928c; display: flex; align-items: center; padding: 0 15px 0 5px; margin-left: -2px; }
.site-chip { width: 24px; height: 24px; border-radius: 50%; background: #1668dc; display: flex; align-items: center; justify-content: center; flex: none; }
.url { margin-left: 8px; font-size: 14.300px; color: #142322; white-space: nowrap; }
.omni-star { width: 16px; height: 16px; margin-left: auto; }
.ext-row { display: flex; align-items: center; padding-left: 8px; flex: 1; }
.ext { width: 36px; height: 34px; display: flex; align-items: center; justify-content: center; position: relative; flex: none; }
.ext-c { color: #4a8df0; font: 700 17px "Liberation Sans", sans-serif; }
.ext-new { flex-direction: column; }
.new-top { width: 14px; height: 8px; border-radius: 6px 6px 0 0; background: #a05cd6; margin-bottom: -1px; }
.new-tag { background: #f01212; color: #fff; font: 700 9.500px/13px "Liberation Sans", sans-serif; padding: 0 2px; border-radius: 2px; }
.warn { position: absolute; right: 6px; bottom: 3px; width: 13px; height: 13px; border-radius: 3px; background: #f9b823; color: #333; font: 700 10px/13px "Liberation Sans", sans-serif; text-align: center; }
.tb-sep { width: 2px; height: 20px; background: #4f7d95; margin: 0 9px 0 7px; flex: none; }
.profile { width: 20px; height: 20px; border-radius: 50%; background: #7b1fa2; color: #fff; font-size: 11px; line-height: 20px; text-align: center; }
.err-pill { width: 70px; height: 34px; border-radius: 17px; background: #506a94; color: #0e1a22; font-size: 12.500px; display: flex; align-items: center; padding-left: 15px; gap: 10px; margin-left: 4px; flex: none; }
.err-dots { width: 4px; height: 16px; fill: #0e1a22; }

/* bookmarks */
.bookmarks { height: 36px; flex: none; background: #6db5ae; border-bottom: 1px solid #3d7f7d; display: flex; align-items: center; padding: 0 0 5px 14px; font-family: "Roboto", "Liberation Sans", sans-serif; font-size: 12px; color: #10211f; }
.bm-apps { width: 14px; height: 14px; }
.bm-sep { width: 2px; height: 17px; background: #4f7d95; margin: 0 14px; flex: none; }
.bm-sep-end { margin-left: 11px; }
.bm-grid { display: grid; grid-template-columns: 154px 155px 155px 153px 104px 153px 274px; margin-left: 1px; }
.bm { display: flex; align-items: center; gap: 5px; white-space: nowrap; }
.ic-webmd { width: 17px; display: flex; flex-direction: column; font-size: 9px; line-height: 8px; }
.web { color: #2b7fbf; }
.md { color: #333; font-weight: 700; }
.ic-nd { width: 17px; color: #d6812d; font-size: 12px; }
.ic-mt { width: 16px; height: 16px; background: #fff; color: #1a2f96; font: 700 9.500px/16px "Liberation Sans", sans-serif; text-align: center; }
.bm-more { width: 12px; height: 12px; }
.bm-all { gap: 8px; }

/* app shell */
.app { height: 607px; flex: none; position: relative; background: #0b2f43; display: flex; flex-direction: column; }
.app-top { height: 50px; flex: none; display: flex; align-items: center; background: #0b2d40; padding: 0 0 2px 11px; }
.brand { width: 239px; display: flex; align-items: center; gap: 8px; flex: none; }
.brand-logo { width: 24px; height: 24px; }
.brand-name { color: #fff; font-size: 20px; font-weight: 700; }
.sound-btn { width: 29px; height: 27px; border-radius: 3px; background: #08202d; display: flex; align-items: center; justify-content: center; flex: none; }
.global-search { width: 491px; height: 32px; margin-left: 10px; border-radius: 5px; background: #264757; display: flex; align-items: center; gap: 10px; padding-left: 10px; color: #8da0a9; font-size: 15px; flex: none; }
.blue-btn { width: 32px; height: 32px; margin-left: 8px; border-radius: 5px; background: #2f86d6; flex: none; }
.top-icons { display: flex; align-items: center; margin-left: 256px; gap: 20px; }
.alarm { width: 44px; height: 44px; margin: 0 -13px; border-radius: 50%; background: #66534a; display: flex; align-items: center; justify-content: center; position: relative; box-shadow: 0 0 0 2px rgba(102,83,74,.25); }
.alarm::before { content: ""; position: absolute; inset: 9px; border-radius: 50%; background: #f58a5a; }
.alarm svg { position: relative; }
.top-sep { width: 1px; height: 16px; background: #2c4c5d; margin: 0 -13px 0 -4px; }
.avatar-me { width: 32px; height: 32px; position: relative; margin-left: 1px; }
.avatar-svg { width: 32px; height: 32px; }
.presence { position: absolute; right: -1px; bottom: -1px; width: 11px; height: 11px; border-radius: 50%; background: #14a866; border: 1.500px solid #0b2d40; }
.grid-ico { width: 16px; height: 16px; margin-left: 6px; }

.app-body { flex: 1; display: flex; min-height: 0; }

/* sidebar */
.sidebar { width: 288px; flex: none; display: flex; flex-direction: column; }
.workspace { height: 45px; flex: none; border-bottom: 2px solid #092637; border-top: 1px solid #092637; display: flex; align-items: center; padding: 0 12px 0 10px; }
.ws-name { color: #7a858b; font-size: 16px; font-weight: 700; flex: 1; }
.ws-laptop { width: 14px; height: 12px; margin-right: 15px; }
.ws-toggle { width: 32px; height: 18px; border-radius: 9px; background: #1e6aa8; display: flex; justify-content: flex-end; padding: 2px; }
.ws-toggle i { width: 14px; height: 14px; border-radius: 50%; background: #0a2438; }
.side-main { flex: 1; display: flex; min-height: 0; }
.rail { width: 59px; flex: none; display: flex; flex-direction: column; background: #0a212e; }
.rail-item { height: 56px; flex: none; display: flex; flex-direction: column; align-items: center; justify-content: flex-start; padding: 11px 2px 0 0; gap: 4px; color: #6fc4ee; font-size: 9px; letter-spacing: -.3px; position: relative; background: #0a212e; }
.rail-active { height: 54px; background: #0b2f43; color: #3b9bee; padding-top: 9px; }
.rail-ico { width: 17px; height: 17px; }
.hash { font-size: 17px; line-height: 17px; font-weight: 700; letter-spacing: 0; margin-top: -1px; }
.rail-badge { position: absolute; top: 4px; left: 35px; width: 15px; height: 15px; border-radius: 50%; background: #e02b4f; color: #fff; font-size: 10px; line-height: 15px; text-align: center; letter-spacing: 0; box-shadow: 0 0 0 3px #0a2432; }
.rail-foot { margin-top: auto; height: 56px; border-top: 1px solid #3c4c56; display: flex; justify-content: center; align-items: center; padding-bottom: 3px; }
.gear { width: 20px; height: 20px; margin-left: -5px; }
.panel { flex: 1; min-width: 0; display: flex; flex-direction: column; background: #0b2f43; }
.panel-head { display: flex; align-items: center; padding: 0 18px 0 14px; }
.panel-head h2 { margin: 0; flex: 1; color: #c6d0d6; font-size: 17px; font-weight: 700; line-height: 20px; letter-spacing: -.1px; }
.pins-head { margin-top: 19px; }
.dots { color: #8a9aa2; font-size: 7px; letter-spacing: .2px; line-height: 20px; }
.pins-note { margin: 10px 0 0; padding: 0 30px 0 17px; color: #7f8c93; font-size: 13px; line-height: 20px; }
.conv-head { margin-top: 19px; height: 20px; }
.conv-head .dots { margin-right: 17px; }
.plus { width: 12px; height: 12px; }
.conv { height: 28px; flex: none; display: flex; align-items: center; padding: 0 19px 0 18px; color: #b5c1c7; font-size: 14px; position: relative; }
.conv-active { margin-top: 5px; background: #1a4a66; color: #eef3f5; font-weight: 700; border-left: 2px solid #3b9bee; padding-left: 18px; }
.conv-dot { width: 8px; height: 8px; border-radius: 50%; background: #d9dee1; margin-right: 14px; }
.conv-cloud { width: 14px; height: 12px; margin-right: 10px; }
.conv-badge { margin-left: auto; margin-right: -4px; width: 16px; height: 16px; border-radius: 50%; background: #ee2450; color: #fff; font-size: 10px; line-height: 16px; text-align: center; }
.show-all { display: flex; justify-content: flex-end; padding-right: 15px; margin-top: 4px; color: #8f9ea6; font-size: 13px; }
.show-all span { border-bottom: 1px dotted #8f9ea6; line-height: 15px; }
.recs { margin: 11px 9px 0 8px; height: 65px; flex: none; border: 1px dashed #173f54; border-radius: 5px; padding: 9px 12px; background: #0a2d40; }
.recs-head { display: flex; align-items: center; justify-content: space-between; color: #bcc8ce; font-size: 14px; line-height: 20px; }
.recs-x { width: 13px; height: 13px; color: #7c8d96; margin-right: 3px; }
.recs-row { display: flex; align-items: center; margin-top: 9px; color: #bcc8ce; font-size: 14px; line-height: 20px; padding-left: 9px; }
.recs-row i { width: 8px; height: 8px; border-radius: 50%; background: #7b868d; margin-right: 13px; }

/* chat */
.chat { width: 1067px; margin: 0 0 2px 3px; flex: none; background: #fff; border-radius: 10px; overflow: hidden; display: flex; flex-direction: column; }
.chat-head { height: 55px; flex: none; display: flex; align-items: center; padding: 0 10px 0 7px; box-shadow: 0 1px 2px rgba(0,0,0,.12); position: relative; z-index: 1; background: #fff; }
.chat-avatar { width: 48px; height: 46px; border-radius: 2px; background: #7a1fa2; color: #fff; font-size: 28px; text-align: center; line-height: 46px; position: relative; overflow: hidden; flex: none; font-weight: 400; }
.chat-avatar i { position: absolute; right: -1px; bottom: -1px; width: 16px; height: 16px; border-radius: 6px 0 0 0; background: #fff; }
.chat-avatar i::after { content: ""; position: absolute; left: 3px; top: 3px; width: 10px; height: 10px; border-radius: 50%; background: #d2d2d2; }
.chat-who { margin-left: 12px; display: flex; flex-direction: column; flex: 1; }
.chat-name { color: #38a0f5; font-size: 15.500px; font-weight: 700; line-height: 20px; margin-top: -2px; }
.chat-status { color: #777; font-size: 12px; line-height: 16px; margin-top: 3px; }
.chat-actions { width: 140px; height: 35px; margin-top: 1px; border-radius: 5px; background: #eff2f6; display: flex; align-items: center; justify-content: space-between; padding: 0 12px 0 11px; }
.act-sep { width: 1px; height: 14px; background: #d7dce1; }
.chat-scroll { flex: 1; min-height: 0; display: flex; position: relative; padding-left: 59px; }
.thread { width: 400px; flex: none; display: flex; flex-direction: column; }
.msg-stub { height: 5px; border: 1px solid #e3e6e9; border-top: 0; border-radius: 0 0 5px 5px; }
.audio-card { height: 82px; margin-top: 19px; border: 1px solid #e3e6e9; border-radius: 5px; padding: 18px 5px 0 8px; flex: none; }
.audio-top { display: flex; align-items: center; }
.audio-play { width: 28px; height: 28px; border-radius: 50%; background: #e6e6e6; display: flex; align-items: center; justify-content: center; flex: none; }
.audio-track { flex: 1; height: 3px; margin: -2px 7px 0 18px; background: #e4e4e4; position: relative; }
.audio-track i { position: absolute; left: -6px; top: -4.500px; width: 12px; height: 12px; border-radius: 50%; background: #2e97ff; }
.audio-bottom { display: flex; align-items: center; margin-top: 5px; padding-left: 1px; color: #333; font-size: 13.800px; }
.audio-time { margin-left: 11px; padding-right: 6px; border-right: 1px solid #e3e6e9; line-height: 14px; }
.audio-speed { margin-left: 6px; width: 40px; height: 18px; border: 1px solid #e1e5e9; border-radius: 9px; background: #f2f4f6; font-size: 12px; line-height: 16px; text-align: center; }
.audio-dl { margin-left: auto; margin-right: 5px; }
.video-card { height: 200px; margin: 21px 1px 0; background: #000; border-radius: 3px; flex: none; position: relative; display: flex; align-items: center; justify-content: center; }
.video-meta { position: absolute; left: 10px; top: 10px; display: flex; align-items: center; gap: 8px; }
.video-badge { width: 24px; height: 24px; border-radius: 50%; background: #4d4d4d; display: flex; align-items: center; justify-content: center; }
.video-time { width: 46px; height: 24px; border-radius: 3px; background: #4f4f4f; color: #f2f2f2; font-size: 14px; line-height: 24px; text-align: center; }
.video-play { width: 20px; height: 22px; margin-left: 3px; }
.date-col { padding: 9px 0 0 27px; flex: none; }
.today { width: 88px; height: 25px; border-radius: 13px; background: #fff; box-shadow: 0 1px 4px rgba(0,0,0,.1); display: flex; align-items: center; justify-content: center; gap: 4px; color: #7c8287; font-size: 13px; }
.ticks { flex: 1; position: relative; }
.tick { position: absolute; width: 14px; height: 12px; right: 17px; }
.tick-a { top: -4px; }
.tick-b { top: 97px; }
.tick-c { top: 319px; }
.composer-wrap { height: 134px; flex: none; background: #eef2f5; padding: 10px 10px 10px 9px; }
.composer { height: 114px; background: #fff; border-radius: 8px; border-top: 1px solid #e6e9ec; display: flex; flex-direction: column; padding: 0 0 0 10px; }
.placeholder { margin: 8px 0 0; color: #c4c6c8; font-size: 14.170px; line-height: 20px; }
.composer-tools { margin-top: auto; height: 38px; display: flex; align-items: center; padding: 0 0 3px 3px; }
.tool { width: 15px; height: 15px; }
.tool-sep { width: 1px; height: 14px; background: #dfe3e6; margin-left: 10px; }
.tool-mic { margin-left: 11px; }
.tool-cam { margin-left: 17px; }
.tool-scr { margin-left: 17px; }
.tool-sep2 { margin-left: 10px; }
.tool-cmd { margin-left: 11px; }
.tool-magic { margin-left: 765px; }
.tool-aa { margin-left: 15px; color: #64717f; font-size: 15px; width: 20px; }
.tool-emoji { margin-left: 13px; width: 16px; height: 16px; }

/* overlays */
.toast { position: absolute; left: 475px; top: 15px; width: 407px; height: 61px; display: flex; align-items: center; background: #fff; border-radius: 4px; overflow: hidden; box-shadow: 0 1px 4px rgba(0,0,0,.22); z-index: 5; }
.toast-side { width: 60px; height: 100%; background: #4a90e2; display: flex; align-items: center; justify-content: center; flex: none; }
.toast-ico { width: 24px; height: 24px; }
.toast-text { margin-left: 20px; color: #222; font-size: 15.850px; white-space: nowrap; }
.ai-fab { position: absolute; left: 1311px; top: 315px; width: 48px; height: 50px; border-radius: 12px 0 0 12px; background: #000; display: flex; align-items: center; justify-content: center; z-index: 3; }
.ai-ico { width: 28px; height: 28px; margin-left: 2px; }
.gram-a { position: absolute; left: 1311px; top: 490px; width: 50px; height: 50px; border-radius: 25px 0 0 25px; background: #fff; box-shadow: -1px 0 2px rgba(0,0,0,.08); z-index: 3; }
.gram-dot { position: absolute; left: 12px; top: 15px; width: 30px; height: 7px; border-radius: 4px; background: #00a68c; }
.gram-dot2 { top: 27px; }
.gram-b { position: absolute; left: 1321px; top: 541px; width: 40px; height: 36px; border-radius: 18px 0 0 18px; background: #fff; box-shadow: -1px 0 2px rgba(0,0,0,.08); z-index: 3; }
.gram-tag { position: absolute; left: 1285px; top: 516px; width: 45px; height: 30px; border: 1px solid #c5d5dc; border-radius: 14px 0 0 0; background: #fff; display: flex; z-index: 2; padding: 6px 0 0 6px; gap: 6px; }
.gram-bulb { width: 16px; height: 20px; }
.gram-green { width: 15px; height: 16px; margin-top: 7px; background: #00876f; }
.shot-bar { position: absolute; left: 1325px; top: 477px; width: 26px; height: 126px; border-radius: 2px; background: #1b1b1b; display: flex; flex-direction: column; align-items: center; z-index: 4; }
.shot-top { height: 17px; width: 100%; display: flex; align-items: center; justify-content: center; gap: 3px; flex: none; }
.shot-dots { color: #ddd; font-size: 5px; }
.shot-btn { width: 22px; height: 26px; display: flex; align-items: center; justify-content: center; flex: none; }
.shot-btn-on { height: 22px; background: #3a3a3a; margin-bottom: 3px; }
.shot-ico { width: 20px; height: 20px; }

/* taskbar */
.taskbar { height: 40px; flex: none; background: #1b2b3d; display: flex; align-items: center; padding-left: 10px; font-family: "Open Sans", "Liberation Sans", sans-serif; }
.start { width: 16px; height: 16px; }
.task-search { width: 344px; height: 40px; margin-left: 17px; background: #f2f2f2; display: flex; align-items: center; padding-left: 11px; gap: 11px; color: #1f2c3a; font-size: 14px; flex: none; }
.task-apps { display: flex; margin-left: -1px; }
.task-app { width: 49.200px; height: 40px; display: flex; align-items: center; justify-content: center; position: relative; flex: none; }
.task-on { box-shadow: inset 0 -2px 0 #76b9ed; }
.wa-badge { position: absolute; right: 7px; bottom: 5px; width: 15px; height: 15px; border-radius: 50%; background: #333; border: 1px solid #888; color: #fff; font-size: 9px; line-height: 13px; text-align: center; font-weight: 400; }
.tray { margin-left: auto; display: flex; align-items: center; gap: 6px; color: #fff; }
.tray-caret { margin-right: 2px; }
.tray-cam { position: relative; width: 18px; height: 18px; }
.tray-cam i { position: absolute; right: -2px; bottom: -2px; width: 7px; height: 7px; border-radius: 50%; background: #ef1c24; }
.tray-wifi { margin-left: 2px; }
.clock { width: 66px; margin-left: -4px; display: flex; flex-direction: column; align-items: center; font-size: 12px; line-height: 18px; }
.tray-note { position: relative; width: 18px; height: 18px; margin: 0 24px 0 4px; }
.tray-note b { position: absolute; left: 8px; top: 6px; width: 16px; height: 16px; border-radius: 50%; background: #3c4652; color: #fff; font-size: 10px; line-height: 16px; text-align: center; }
```
